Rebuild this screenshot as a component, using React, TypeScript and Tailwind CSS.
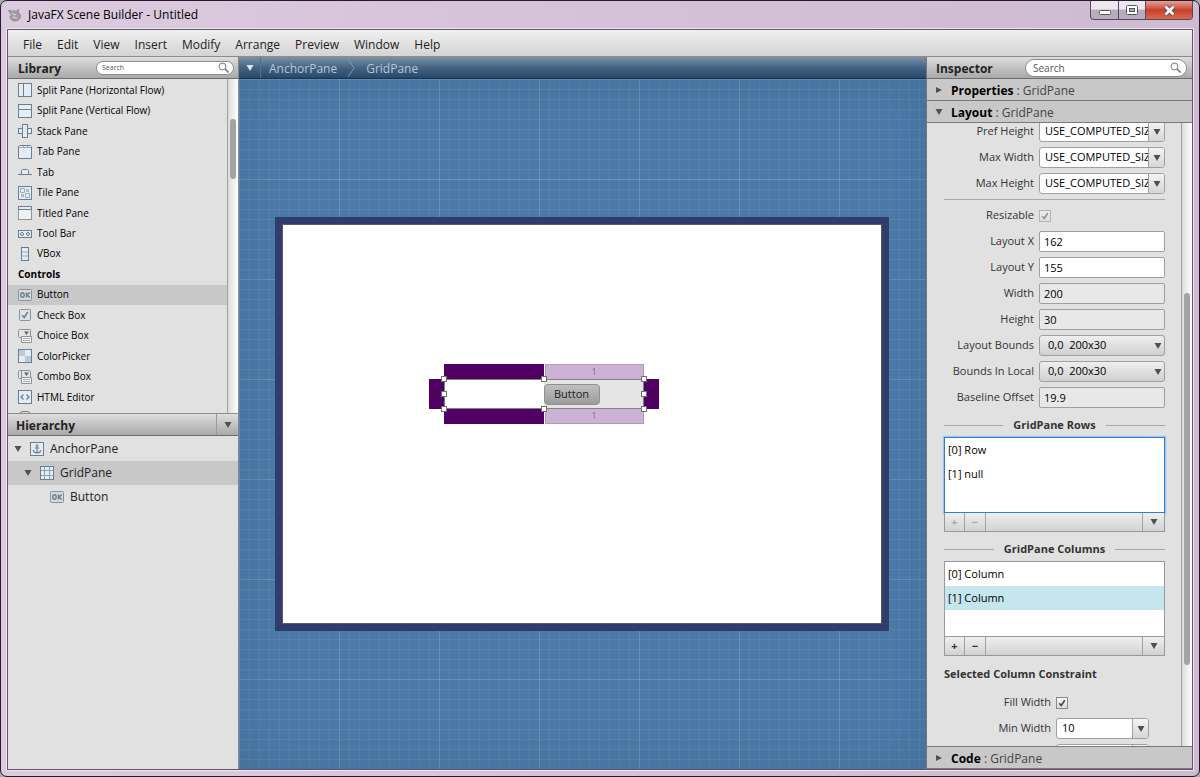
import { useState } from "react"
import type { ReactNode } from "react"

const LIBRARY = [
  "Split Pane (Horizontal Flow)",
  "Split Pane (Vertical Flow)",
  "Stack Pane",
  "Tab Pane",
  "Tab",
  "Tile Pane",
  "Titled Pane",
  "Tool Bar",
  "VBox",
  "Controls",
  "Button",
  "Check Box",
  "Choice Box",
  "ColorPicker",
  "Combo Box",
  "HTML Editor",
] as const
type LibraryItem = (typeof LIBRARY)[number]

const MENUS = ["File", "Edit", "View", "Insert", "Modify", "Arrange", "Preview", "Window", "Help"]

const ICONS: Record<string, ReactNode> = {
  "Split Pane (Horizontal Flow)": (
    <>
      <rect x="0.5" y="0.5" width="13" height="13" />
      <path d="M5.5 1v12" />
    </>
  ),
  "Split Pane (Vertical Flow)": (
    <>
      <rect x="0.5" y="0.5" width="13" height="13" />
      <path d="M1 5.5h12" />
    </>
  ),
  "Stack Pane": (
    <>
      <rect x="0.5" y="4.5" width="13" height="5" />
      <rect x="4.5" y="0.5" width="5" height="13" />
    </>
  ),
  "Tab Pane": (
    <>
      <path d="M0.5 1.5l1-1h11l1 1v12h-13z" />
      <path d="M1 2.5h12M5.5 1v1.5M9.5 1v1.5" stroke="#9aabb9" />
    </>
  ),
  Tab: (
    <>
      <path d="M3.5 9.5v-4l1-1h5l1 1v4" />
      <path d="M0 9.500h14" />
    </>
  ),
  "Tile Pane": (
    <>
      <rect x="0.5" y="0.5" width="13" height="13" />
      <path d="M2.5 2.5h4v4h-4zM8.5 3.5h2v2h-2zM3.5 8.5h2v2h-2zM7.5 7.5h4v4h-4z" stroke="#9aabb9" />
    </>
  ),
  "Titled Pane": (
    <>
      <rect x="0.5" y="0.5" width="13" height="13" fill="#f1f1f1" stroke="#8b98a3" />
      <path d="M0.5 0.5h13v3h-13z" />
    </>
  ),
  "Tool Bar": (
    <>
      <rect x="0.5" y="3.5" width="13" height="7" />
      <circle cx="4" cy="7" r="1.5" />
      <circle cx="10" cy="7" r="1.5" />
    </>
  ),
  VBox: (
    <>
      <rect x="3.5" y="0.5" width="7" height="13" />
      <path d="M4 5h6M4 9h6" stroke="#9aabb9" />
    </>
  ),
  Button: (
    <>
      <rect x="0.5" y="1.5" width="13" height="11" rx="1" fill="#d6dadd" stroke="#8b9298" />
      <ellipse cx="4.5" cy="7" rx="1.7" ry="2.2" fill="none" strokeWidth="1.4" />
      <path d="M8.5 4.5v5M11.8 4.5L9 7l2.8 2.5" fill="none" strokeWidth="1.4" />
    </>
  ),
  "Check Box": (
    <>
      <rect x="1.5" y="1.5" width="11" height="11" rx="1" fill="#dde2e6" stroke="#8b9298" />
      <path d="M4.2 7.3l2 2.2L9.8 4" fill="none" strokeWidth="1.6" />
    </>
  ),
  "Choice Box": (
    <>
      <rect x="0.5" y="0.5" width="12" height="8" rx="1" fill="#e4e4e4" stroke="#8b9298" />
      <path d="M6 2.5h5L8.5 6z" fill="#5d6972" stroke="none" />
      <path d="M3.5 7.5h10v6h-10z" fill="#f6f6f6" stroke="#8b9298" />
      <path d="M5 9.5h7M5 11.5h7" stroke="#a5acb1" />
    </>
  ),
  ColorPicker: (
    <>
      <rect x="0.5" y="0.5" width="13" height="13" />
      <path d="M1 1h6v6H1zM7 7h6v6H7z" fill="#bccad6" stroke="none" />
    </>
  ),
  "Combo Box": (
    <>
      <rect x="0.5" y="0.5" width="12" height="8" rx="1" fill="#e4e4e4" stroke="#8b9298" />
      <path d="M3.5 1v7" stroke="#8b9298" />
      <path d="M6 2.5h5L8.5 6z" fill="#5d6972" stroke="none" />
      <path d="M3.5 7.5h10v6h-10z" fill="#f6f6f6" stroke="#8b9298" />
      <path d="M5 9.5h7M5 11.5h7" stroke="#a5acb1" />
    </>
  ),
  "HTML Editor": (
    <>
      <rect x="0.5" y="0.5" width="13" height="13" />
      <path d="M5.5 4.5L3 7l2.5 2.5M8.5 4.5L11 7l-2.5 2.5" fill="none" strokeWidth="1.3" />
    </>
  ),
  Hyperlink: <rect x="2.5" y="0.5" width="9" height="11" rx="2" fill="#d6dadd" />,
  AnchorPane: (
    <>
      <rect x="0.5" y="0.5" width="13" height="13" />
      <circle cx="7" cy="3.6" r="1" fill="none" />
      <path d="M7 4.8V11M4.8 6h4.4M3.2 8c.3 2 1.8 3 3.8 3s3.5-1 3.8-3" fill="none" strokeWidth="1.2" />
    </>
  ),
  GridPane: (
    <>
      <rect x="0.5" y="0.5" width="13" height="13" />
      <path d="M4.5 1v12M9.5 1v12M1 4.5h12M1 9.5h12" stroke="#8fa1b0" />
    </>
  ),
}

function Icon({ name }: { name: string }) {
  return (
    <svg width="14" height="14" viewBox="0 0 14 14" className="shrink-0" fill="#e3edf5" stroke="#6d7f8e" aria-hidden>
      {ICONS[name]}
    </svg>
  )
}

function Arrow({ dir = "down", fill = "#505050", className = "" }: { dir?: "down" | "right"; fill?: string; className?: string }) {
  return (
    <svg width="8" height="6" viewBox="0 0 8 6" fill={fill} className={`shrink-0 ${className}`} aria-hidden>
      <path d={dir === "down" ? "M0.5 0h7L4 6z" : "M1 0l6 3-6 3z"} />
    </svg>
  )
}

function SearchBox({ small, label }: { small?: boolean; label: string }) {
  return (
    <label
      className={`flex items-center rounded-full border border-[#8c8c8c] bg-white ${
        small ? "h-[14px] w-[138px] pr-1 pl-[5px]" : "h-[18px] w-[162px] pr-[5px] pl-[7px]"
      }`}
    >
      <input
        aria-label={label}
        placeholder="Search"
        className={`h-full w-0 flex-1 outline-none placeholder:text-[#555] ${small ? "text-[7px]" : "text-[10px]"}`}
      />
      <svg width="11" height="11" viewBox="0 0 11 11" fill="none" stroke="#777" aria-hidden>
        <circle cx="4.5" cy="4.5" r="3.5" />
        <path d="M7 7l3.500 3.500" strokeWidth="1.6" />
      </svg>
    </label>
  )
}

function Header({ title, children }: { title: string; children?: ReactNode }) {
  return (
    <div className="flex h-[22px] shrink-0 items-center justify-between border-b border-[#6e6e6e] bg-linear-to-b from-[#dedede] to-[#a9a9a9]">
      <h2 className="pt-0.5 text-[12px] font-bold text-[#222]">{title}</h2>
      {children}
    </div>
  )
}

function SectionBar({ title, open }: { title: string; open?: boolean }) {
  return (
    <button className="flex h-[22px] w-full shrink-0 items-center gap-2 border-b border-[#7a7a7a] bg-[#c8c8c8] pl-2 text-left text-[12px] text-[#444]">
      <Arrow dir={open ? "down" : "right"} />
      <span className="pt-0.5">
        <b className="text-black">{title}</b> : GridPane
      </span>
    </button>
  )
}

function Row({ label, id, children }: { label: string; id: string; children: ReactNode }) {
  return (
    <div className="flex h-[21px] items-center gap-[5px]">
      <label htmlFor={id} className="w-[90px] text-right whitespace-nowrap">
        {label}
      </label>
      {children}
    </div>
  )
}

function TextField({ label, value, readOnly }: { label: string; value: string; readOnly?: boolean }) {
  return (
    <Row label={label} id={label}>
      <input
        id={label}
        defaultValue={value}
        readOnly={readOnly}
        className={`h-[21px] w-[126px] rounded-[2px] border border-[#a0a0a0] px-1 text-black ${
          readOnly ? "bg-[#e8e8e8]" : "bg-white"
        }`}
      />
    </Row>
  )
}

function ComboField({ id, value, width = "w-[126px]" }: { id: string; value?: string; width?: string }) {
  return (
    <div className={`flex h-[21px] shrink-0 overflow-hidden rounded-[3px] border border-[#a0a0a0] bg-white ${width}`}>
      <input id={id} aria-label={id} defaultValue={value} className="w-0 flex-1 pl-[5px] text-black outline-none" />
      <button
        aria-label={`${id} values`}
        className="flex w-4 items-center justify-center border-l border-[#a0a0a0] bg-linear-to-b from-[#f4f4f4] to-[#d6d6d6]"
      >
        <Arrow />
      </button>
    </div>
  )
}

function SelectField({ label }: { label: string }) {
  return (
    <Row label={label} id={label}>
      <div className="relative">
        <select
          id={label}
          className="block h-[21px] w-[126px] appearance-none rounded-[3px] border border-[#a0a0a0] bg-linear-to-b from-[#efefef] to-[#d0d0d0] pl-2 text-black"
        >
          <option>0,0&nbsp; 200x30</option>
        </select>
        <Arrow className="pointer-events-none absolute top-2 right-[3px]" />
      </div>
    </Row>
  )
}

function CheckBox({ id, disabled }: { id: string; disabled?: boolean }) {
  return (
    <span className={`relative size-3 ${disabled ? "opacity-50" : ""}`}>
      <input
        id={id}
        type="checkbox"
        defaultChecked
        disabled={disabled}
        className="block size-3 appearance-none border border-[#888] bg-linear-to-b from-[#f6f6f6] to-[#dcdcdc]"
      />
      <svg viewBox="0 0 12 12" className="pointer-events-none absolute inset-0" fill="none" stroke="#444" strokeWidth="1.6" aria-hidden>
        <path d="M3.200 6.200l2 2.300L8.800 3.200" />
      </svg>
    </span>
  )
}

function ConstraintList({ title, items, selected, focused }: { title: string; items: string[]; selected?: number; focused?: boolean }) {
  const cell = "flex h-[18px] items-center justify-center border-[#a0a0a0]"
  return (
    <section>
      <h3 className="flex h-6 items-center gap-[10px] font-bold text-[#333] before:h-px before:flex-1 before:bg-[#a8a8a8] after:h-px after:flex-1 after:bg-[#a8a8a8]">
        {title}
      </h3>
      <ul
        className={`h-[76px] border bg-white text-black ${
          focused ? "border-[#2f7fd0] shadow-[0_0_1px_1px_#9cc6f0]" : "border-[#999]"
        }`}
      >
        {items.map((item, i) => (
          <li key={item} className={`flex h-6 items-center pl-[3px] whitespace-pre ${i === selected ? "bg-[#c6e6ee]" : ""}`}>
            {item}
          </li>
        ))}
      </ul>
      <div className="flex border border-t-0 border-[#999] bg-linear-to-b from-[#efefef] to-[#d2d2d2] font-bold text-[#333]">
        <button disabled={focused} aria-label={`Add to ${title}`} className={`${cell} w-5 border-r disabled:text-[#aaa]`}>
          +
        </button>
        <button disabled={focused} aria-label={`Remove from ${title}`} className={`${cell} w-[21px] border-r disabled:text-[#aaa]`}>
          −
        </button>
        <button aria-label={`${title} options`} className={`${cell} ml-auto w-[22px] border-l`}>
          <Arrow />
        </button>
      </div>
    </section>
  )
}

function TitleBar() {
  const cap = "flex h-full items-center justify-center border-r border-[#55475c]"
  return (
    <header className="flex h-[28px] shrink-0 items-start">
      <div className="flex h-full flex-1 items-center gap-[6px] text-[12px] text-black">
        <svg width="15" height="14" viewBox="0 0 15 14" fill="#a29da2" stroke="#827d83" strokeWidth="0.7" aria-hidden>
          <path d="M1.500 2.500C3 2 4 3 5 3.500 6.500 2.500 8 2.500 9 3.500l2.500-2c.5 1.500 0 2.500-.5 3.500 2 .5 3 2 2.500 4-.5 2.500-3 4-5.500 4-3 0-5-2-5-4.500 0-1.500.5-2.500 0-3.500z" />
          <path d="M5 5.500l4 1.500M5.500 9l4.500 1M2 6l2 1.500" stroke="#e2dce2" strokeWidth="1" fill="none" />
        </svg>
        JavaFX Scene Builder - Untitled
      </div>
      <div className="flex h-[19px] overflow-hidden rounded-b-[4px] border border-t-0 border-[#55475c] bg-linear-to-b from-[#efe7f0] from-45% to-[#b9abc0] to-50%">
        <button aria-label="Minimize" className={`${cap} w-7 pt-1`}>
          <svg width="12" height="5" aria-hidden>
            <rect x="0.5" y="0.5" width="11" height="4" rx="1" fill="#fff" stroke="#555" />
          </svg>
        </button>
        <button aria-label="Maximize" className={`${cap} w-[27px]`}>
          <svg width="12" height="10" aria-hidden>
            <rect x="0.5" y="0.5" width="11" height="9" rx="1" fill="#fff" stroke="#555" />
            <rect x="3.5" y="3.5" width="5" height="3" fill="#b9abc0" stroke="#555" />
          </svg>
        </button>
        <button
          aria-label="Close"
          className="flex h-full w-[46px] items-center justify-center bg-linear-to-b from-[#e5a396] via-[#c5402a] via-50% to-[#d9694f]"
        >
          <svg width="13" height="11" viewBox="0 0 13 11" aria-hidden>
            <path d="M2.500 1.500l8 8M10.500 1.500l-8 8" stroke="#5c4450" strokeWidth="4.500" />
            <path d="M2.500 1.500l8 8M10.500 1.500l-8 8" stroke="#fff" strokeWidth="2.800" />
          </svg>
        </button>
      </div>
    </header>
  )
}

function LibraryPanel() {
  const [picked, setPicked] = useState<LibraryItem>("Button")
  return (
    <section className="flex h-[356px] shrink-0 flex-col">
      <div className="[&>div]:pr-1 [&>div]:pl-[10px]">
        <Header title="Library">
          <SearchBox small label="Search library" />
        </Header>
      </div>
      <div className="flex min-h-0 flex-1">
        <div className="flex-1 overflow-hidden pt-px">
          <ul className="grid h-[348px] auto-rows-fr text-[10px] text-black">
            {LIBRARY.map((item) =>
              item === "Controls" ? (
                <li key={item} className="flex items-center pl-[10px] font-bold">
                  {item}
                </li>
              ) : (
                <li key={item} className={item === picked ? "bg-[#c8c8c8]" : ""}>
                  <button onClick={() => setPicked(item)} className="flex size-full items-center gap-[5px] pl-[10px]">
                    <Icon name={item} />
                    {item}
                  </button>
                </li>
              )
            )}
            <li className="flex items-center pl-[10px]">
              <Icon name="Hyperlink" />
            </li>
          </ul>
        </div>
        <div className="w-[11px] border-l border-[#a0a0a0] bg-linear-to-r from-[#dcdcdc] to-white pt-10 pl-0.5">
          <div className="h-[60px] w-[6px] rounded-full bg-[#a3a3a3]" />
        </div>
      </div>
    </section>
  )
}

function HierarchyPanel() {
  const row = "flex h-6 items-center gap-[6px]"
  return (
    <section className="flex flex-1 flex-col border-t border-[#8c8c8c]">
      <div className="[&>div]:pl-2">
        <Header title="Hierarchy">
          <button aria-label="Hierarchy options" className="flex h-full w-[22px] items-center justify-center border-l border-[#999]">
            <Arrow />
          </button>
        </Header>
      </div>
      <ul className="pt-px text-[12px] text-[#222]">
        <li className={`${row} pl-[6px]`}>
          <Arrow className="mr-0.5" />
          <Icon name="AnchorPane" />
          AnchorPane
        </li>
        <li className={`${row} bg-[#c8c8c8] pl-4`}>
          <Arrow className="mr-0.5" />
          <Icon name="GridPane" />
          GridPane
        </li>
        <li className={`${row} pl-[42px]`}>
          <Icon name="Button" />
          Button
        </li>
      </ul>
    </section>
  )
}

const HANDLES = [
  "left-[-3px] top-[-3px]",
  "left-[97px] top-[-3px]",
  "left-[197px] top-[-3px]",
  "left-[-3px] top-[12px]",
  "left-[197px] top-[12px]",
  "left-[-3px] top-[27px]",
  "left-[97px] top-[27px]",
  "left-[197px] top-[27px]",
]

function Canvas() {
  const tab = "absolute left-[101px] flex h-[16px] w-[99px] items-center justify-center border border-[#b39cbb] bg-[#ccb2d4] text-[9px] text-[#85688f]"
  return (
    <main className="flex min-w-0 flex-1 flex-col">
      <nav className="flex h-[22px] shrink-0 items-center border-b border-[#16324c] bg-linear-to-b from-[#7d91a5] via-[#456484] to-[#27486a] text-[12px] text-[#b9c6d2]">
        <button aria-label="Document options" className="flex h-full w-[22px] items-center justify-center border-r border-[#54728f]">
          <Arrow fill="#dde4ea" />
        </button>
        <a href="#anchor" className="pt-0.5 pl-2">
          AnchorPane
        </a>
        <svg width="8" height="20" viewBox="0 0 8 20" className="mr-[11px] ml-[10px]" fill="none" stroke="#7d97b0" aria-hidden>
          <path d="M1 1l6 9-6 9" />
        </svg>
        <a href="#grid" className="pt-0.5">
          GridPane
        </a>
      </nav>
      <div className="flex flex-1 items-center justify-center bg-[#4c7aa8] bg-[linear-gradient(to_right,#ffffff18_1px,transparent_1px),linear-gradient(to_bottom,#ffffff18_1px,transparent_1px),linear-gradient(to_right,#ffffff10_1px,transparent_1px),linear-gradient(to_bottom,#ffffff10_1px,transparent_1px)] bg-size-[100px_100px,100px_100px,10px_10px,10px_10px] pr-0.5 shadow-[inset_0_0_50px_#1f3f6633]">
        <div className="relative h-[414px] w-[614px] border-[7px] border-[#303c6c] bg-white outline-1 -outline-offset-8 outline-[#5a5a60]">
          {/* selected grid pane */}
          <div className="absolute top-[155px] left-[162px] h-[30px] w-[200px]">
            <div className="absolute top-[-15px] left-0 h-[15px] w-[100px] bg-[#500062]" />
            <div className="absolute top-[30px] left-0 h-[15px] w-[100px] bg-[#500062]" />
            <div className="absolute top-0 left-[-15px] h-[30px] w-[15px] bg-[#500062]" />
            <div className="absolute top-0 left-[200px] h-[30px] w-[15px] bg-[#500062]" />
            <div className={`${tab} top-[-15px]`}>1</div>
            <div className={`${tab} top-[29px]`}>1</div>
            <div className="absolute inset-0 border border-[#828282] bg-linear-to-r from-white from-50% to-[#e5e5e5] to-50%" />
            <button className="absolute top-[5px] left-[100px] h-[21px] w-14 rounded-[4px] border border-[#909090] bg-linear-to-b from-[#c0c0c0] to-[#9c9c9c] text-[11px] text-[#222]">
              Button
            </button>
            {HANDLES.map((pos) => (
              <span key={pos} className={`absolute size-[6px] border border-[#707070] bg-white ${pos}`} />
            ))}
          </div>
        </div>
      </div>
    </main>
  )
}

function Inspector() {
  return (
    <aside className="flex w-[266px] shrink-0 flex-col border-l border-[#777] bg-[#e1e1e1] text-[11px] text-[#333]">
      <div className="[&>div]:pr-[5px] [&>div]:pl-[9px]">
        <Header title="Inspector">
          <SearchBox label="Search inspector" />
        </Header>
      </div>
      <SectionBar title="Properties" />
      <SectionBar title="Layout" open />
      <div className="flex h-0 flex-1">
        <div className="flex-1 overflow-hidden pr-[16px] pl-[17px]">
          <div className="-mt-0.5 flex flex-col gap-[5px]">
            {["Pref Height", "Max Width", "Max Height"].map((name) => (
              <Row key={name} label={name} id={name}>
                <ComboField id={name} value="USE_COMPUTED_SIZE" />
              </Row>
            ))}
            <hr className="border-[#a8a8a8]" />
            <Row label="Resizable" id="Resizable">
              <CheckBox id="Resizable" disabled />
            </Row>
            <TextField label="Layout X" value="162" />
            <TextField label="Layout Y" value="155" />
            <TextField label="Width" value="200" readOnly />
            <TextField label="Height" value="30" readOnly />
            <SelectField label="Layout Bounds" />
            <SelectField label="Bounds In Local" />
            <TextField label="Baseline Offset" value="19.9" readOnly />
            <ConstraintList title="GridPane Rows" items={["[0] Row", "[1] null"]} focused />
            <ConstraintList title="GridPane Columns" items={["[0] Column", "[1] Column"]} selected={1} />
            <h3 className="flex h-[26px] items-center font-bold text-[#333]">Selected Column Constraint</h3>
            <div className="flex flex-col gap-[5px] pl-[17px]">
              <Row label="Fill Width" id="Fill Width">
                <CheckBox id="Fill Width" />
              </Row>
              <Row label="Min Width" id="Min Width">
                <ComboField id="Min Width" value="10" width="w-[93px]" />
              </Row>
              <div className="pl-[95px]">
                <ComboField id="Pref Width" width="w-[93px]" />
              </div>
            </div>
          </div>
        </div>
        <div className="w-[11px] border-l border-[#a0a0a0] bg-linear-to-r from-[#dcdcdc] to-white pt-[170px] pl-0.5">
          <div className="h-[372px] w-[6px] rounded-full bg-[#a3a3a3]" />
        </div>
      </div>
      <div className="border-t border-[#7a7a7a]">
        <SectionBar title="Code" />
      </div>
    </aside>
  )
}

export default function App() {
  return (
    <div className="h-screen bg-[#aaa] font-['Open_Sans',sans-serif]">
      <div className="flex h-full flex-col rounded-[7px] border border-[#241c28] bg-linear-to-r from-[#dccbdf] via-[#d5c1d9] to-[#cdbbd0] px-[6px] pb-[6px]">
        <TitleBar />
        <div className="flex min-h-0 flex-1 flex-col border border-[#635767] bg-[#e1e1e1] shadow-[0_0_0_1px_#efe6f1]">
          <nav className="flex h-[27px] shrink-0 items-center gap-px border-b border-[#8c8c8c] bg-linear-to-b from-[#f0f0f0] to-[#d4d4d4] pl-2 text-[12px] text-[#222]">
            {MENUS.map((name) => (
              <button key={name} className="px-[7px] pt-[3px]">
                {name}
              </button>
            ))}
          </nav>
          <div className="flex min-h-0 flex-1">
            <aside className="flex w-[231px] shrink-0 flex-col border-r border-[#808890]">
              <LibraryPanel />
              <HierarchyPanel />
            </aside>
            <Canvas />
            <Inspector />
          </div>
        </div>
      </div>
    </div>
  )
}
